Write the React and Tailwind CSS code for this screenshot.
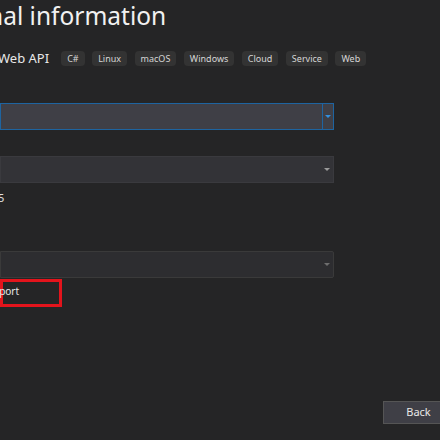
export default function App() {
  const tags = ["C#", "Linux", "macOS", "Windows", "Cloud", "Service", "Web"];
  const font = { fontFamily: '"Noto Sans", "Open Sans", sans-serif' };
  return (
    <div className="w-[440px] h-[440px] overflow-hidden bg-[#252526] text-[#f1f1f1] flex flex-col" style={font}>
      <div className="h-[34px] flex items-start">
        <div className="ml-[-12px] mt-[-1px] text-[24.5px] leading-[34px] whitespace-nowrap text-[#f1f1f1]">nal information</div>
      </div>
      <div className="h-[32px] mt-[8px] flex items-center">
        <div className="ml-[-2px] text-[13px] leading-[20px] whitespace-nowrap text-[#e8e8e8]">Web API</div>
        <div className="flex gap-[7.5px] ml-[12px]">
          {tags.map((t) => (
            <span key={t} className="h-[15px] px-[6px] rounded-[4px] bg-[#333333] text-[9px] leading-[15px] text-[#d6d6d6]">{t}</span>
          ))}
        </div>
      </div>
      <div className="mt-[29px] w-[334px] h-[27px] border border-[#1e64a0] bg-[#3f3f46] flex justify-end">
        <div className="w-[11px] border-l border-[#1e64a0] flex items-center justify-center">
          <svg width="6" height="4" viewBox="0 0 6 4"><path d="M0 0h6L3 3z" fill="#3391e0" /></svg>
        </div>
      </div>
      <div className="mt-[26px] w-[334px] h-[27px] border border-[#3a3a3e] bg-[#333337] flex items-center justify-end pr-[3px]">
        <svg width="6" height="4" viewBox="0 0 6 4"><path d="M0 0h6L3 3z" fill="#9a9a9a" /></svg>
      </div>
      <div className="h-[30px] flex items-center">
        <div className="ml-[-2px] text-[11px] text-[#e0e0e0]">5</div>
      </div>
      <div className="mt-[38px] w-[334px] h-[27px] border border-[#3a3a3a] bg-[#2d2d30] rounded-r-[2px] flex items-center justify-end pr-[3px]">
        <svg width="6" height="4" viewBox="0 0 6 4"><path d="M0 0h6L3 3z" fill="#6e6e6e" /></svg>
      </div>
      <div className="mt-[1px] w-[62px] h-[28px] border-[3px] border-[#e3141c] flex items-center">
        <div className="ml-[-10px] mt-[-4px] text-[10px] text-[#e8e8e8] whitespace-nowrap">pport</div>
      </div>
      <div className="flex-1 flex items-end justify-end pb-[16px]">
        <div className="mr-[-14px] w-[71px] h-[23px] border border-[#555555] bg-[#3f3f46] flex items-center justify-center text-[11px] text-[#e8e8e8]">Back</div>
      </div>
    </div>
  );
}
